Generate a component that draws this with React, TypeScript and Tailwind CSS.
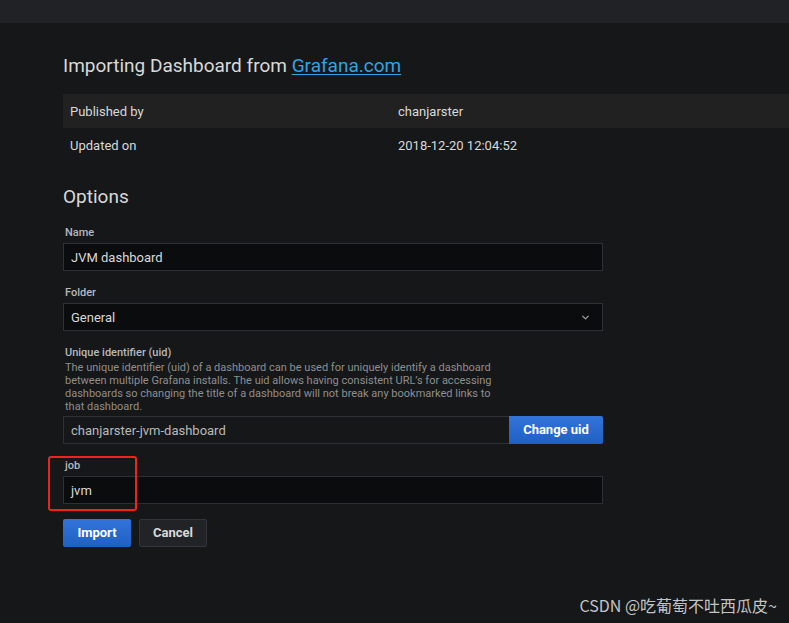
import { ChevronDown } from "lucide-react";

const Field = ({ label, children }: { label: string; children: React.ReactNode }) => (
    <div className="mb-[15px]">
        <div className="text-[11px] font-medium leading-[13px] text-[#b4b7bf] mb-[4px] pl-[2px]">{label}</div>
        {children}
    </div>
);

const inputCls =
    "h-[28px] w-[540px] bg-[#0b0c0e] border border-[#2f3033] flex items-center px-[7px] pt-[1px] text-[13px] text-[#d8d9da]";

const App = () => {
    return (
        <div
            className="relative min-h-screen w-[789px] h-[623px] overflow-hidden bg-[#161719] text-[#d8d9da]"
            style={{ fontFamily: "Roboto, 'Noto Sans CJK SC', sans-serif" }}
        >
            <div className="h-[23px] bg-[#202226]" />

            <div className="pl-[63px] pt-[31px]">
                <h2 className="text-[19px] leading-[24px] text-[#d8d9da]">
                    Importing Dashboard from{" "}
                    <span className="text-[#33a2e5] underline underline-offset-2">Grafana.com</span>
                </h2>

                <div className="mt-[16px] text-[13px]">
                    <div className="flex h-[34px] items-center pt-[1px] bg-[#212121]">
                        <span className="w-[335px] pl-[7px]">Published by</span>
                        <span>chanjarster</span>
                    </div>
                    <div className="flex h-[34px] items-center pt-[1px]">
                        <span className="w-[335px] pl-[7px]">Updated on</span>
                        <span>2018-12-20 12:04:52</span>
                    </div>
                </div>

                <h3 className="mt-[23px] text-[19px] leading-[24px]">Options</h3>

                <div className="mt-[17px]">
                    <Field label="Name">
                        <div className={inputCls}>JVM dashboard</div>
                    </Field>

                    <Field label="Folder">
                        <div className={`${inputCls} justify-between`}>
                            <span>General</span>
                            <ChevronDown className="w-[11px] h-[11px] text-[#9a9a9a] mr-[4px]" strokeWidth={3} />
                        </div>
                    </Field>

                    <div className="mb-[15px]">
                        <div className="text-[11px] font-medium leading-[13px] text-[#b4b7bf] pl-[2px]">
                            Unique identifier (uid)
                        </div>
                        <p className="mt-[2px] w-[436px] pl-[2px] text-[11px] leading-[13px] text-[#8e8e8e] mb-[3px]">
                            The unique identifier (uid) of a dashboard can be used for uniquely identify a dashboard
                            between multiple Grafana installs. The uid allows having consistent URL’s for accessing
                            dashboards so changing the title of a dashboard will not break any bookmarked links to
                            that dashboard.
                        </p>
                        <div className="flex w-[540px]">
                            <div className="h-[28px] flex-1 bg-[#161719] border border-[#2f3033] border-r-0 flex items-center px-[7px] pt-[1px] text-[13px] text-[#b8b9ba]">
                                chanjarster-jvm-dashboard
                            </div>
                            <button className="h-[28px] w-[94px] rounded-r-[2px] bg-gradient-to-b from-[#3274d9] to-[#1f60c4] text-[13px] font-bold text-white">
                                Change uid
                            </button>
                        </div>
                    </div>

                    <Field label="job">
                        <div className={inputCls}>jvm</div>
                    </Field>

                    <div className="flex gap-[8px]">
                        <button className="h-[28px] w-[68px] rounded-[2px] bg-gradient-to-b from-[#3274d9] to-[#1f60c4] text-[13px] font-bold text-white">
                            Import
                        </button>
                        <button className="h-[28px] w-[68px] rounded-[2px] bg-[#222326] border border-[#343539] text-[13px] font-bold text-[#d8d9da]">
                            Cancel
                        </button>
                    </div>
                </div>
            </div>

            {/* annotation box around the job field */}
            <div className="absolute left-[48px] top-[456px] w-[89px] h-[55px] border-2 border-[#f0231c] rounded-[3px]" />

            <div
                className="absolute right-[12px] bottom-[6px] text-[16px] text-[#c4c4c4]"
                style={{ fontFamily: "'Noto Sans CJK SC', sans-serif" }}
            >
                CSDN @吃葡萄不吐西瓜皮~
            </div>
        </div>
    );
};

export default App;
